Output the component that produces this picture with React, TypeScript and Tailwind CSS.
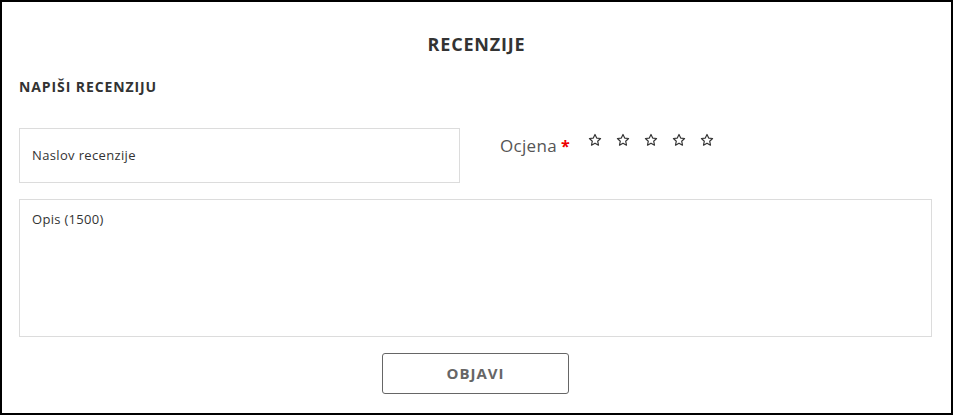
import React from "react";

const Star = () => (
  <svg width="14" height="14" viewBox="0 0 24 24" fill="none" stroke="#333" strokeWidth="2" strokeLinejoin="round">
    <path d="M12 2.5l2.9 6.2 6.7.8-5 4.6 1.4 6.7L12 17.4l-6 3.4 1.4-6.7-5-4.6 6.7-.8z" />
  </svg>
);

export default function App() {
  return (
    <div
      className="w-[953px] h-[415px] border-2 border-black bg-white px-[17px] text-[#333]"
      style={{ fontFamily: '"Open Sans", "Liberation Sans", sans-serif' }}
    >
      <div className="pt-[31px] text-center text-[18px] font-bold leading-[22px] tracking-[0.8px]">RECENZIJE</div>
      <div className="mt-[23px] text-[14px] font-bold leading-[18px] tracking-[0.9px]">NAPIŠI RECENZIJU</div>
      <div className="mt-[32px] flex">
        <div className="w-[441px] h-[55px] border border-[#dcdcdc] flex items-center pl-[12px] pt-[1px] text-[13px] tracking-[0.35px]">
          Naslov recenzije
        </div>
        <div className="ml-[40px] flex items-start pt-[5px]">
          <span className="text-[17px] text-[#555] leading-[22px] mt-[2px] tracking-[0.3px]">Ocjena</span>
          <span className="text-[16px] text-[#e00] font-bold leading-[22px] ml-[4px] mt-[2px]">*</span>
          <div className="ml-[18px] flex gap-[14px]">
            <Star />
            <Star />
            <Star />
            <Star />
            <Star />
          </div>
        </div>
      </div>
      <div className="mt-[16px] w-[913px] h-[138px] border border-[#dcdcdc] pl-[12px] pt-[10px] text-[13px] leading-[18px] tracking-[0.3px]">
        Opis (1500)
      </div>
      <div className="mt-[16px] flex">
        <div className="ml-[363px] w-[187px] h-[41px] border border-[#666] rounded-[3px] flex items-center justify-center text-[15px] font-bold text-[#666] tracking-[1px]">
          OBJAVI
        </div>
      </div>
    </div>
  );
}
